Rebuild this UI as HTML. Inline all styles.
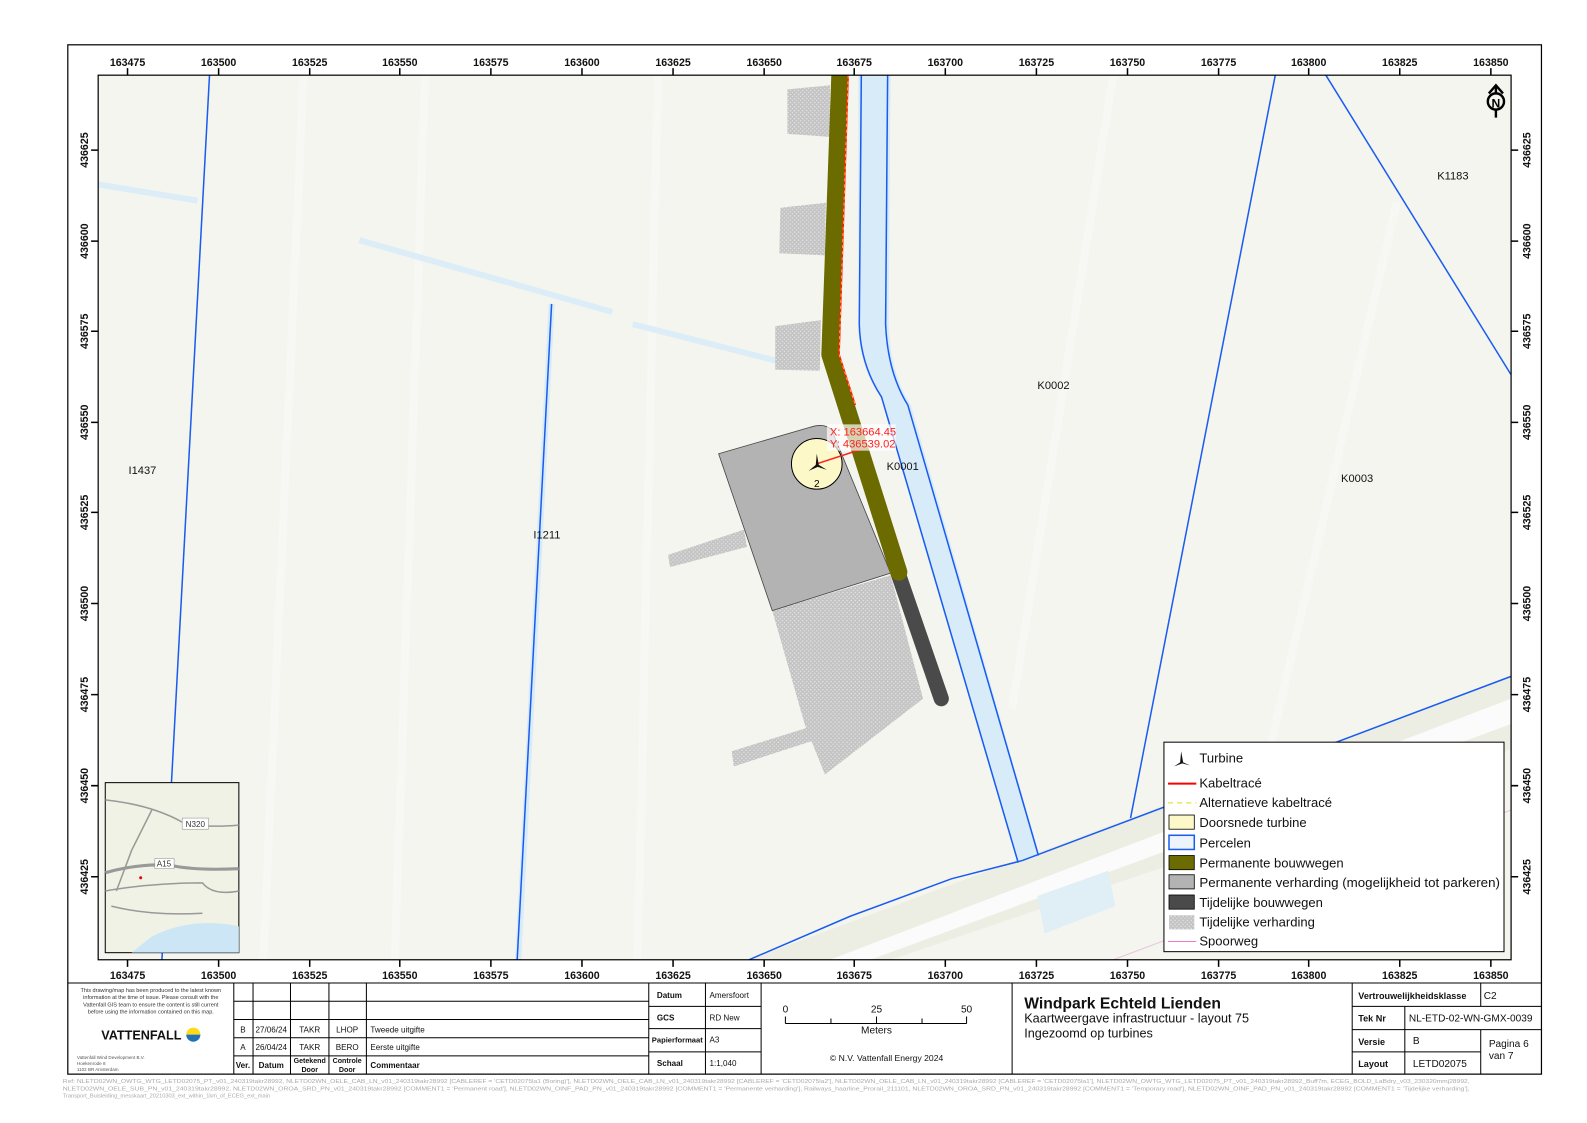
<!DOCTYPE html>
<html><head><meta charset="utf-8"><style>
html,body{margin:0;padding:0;background:#fff;}
svg{display:block;font-family:"Liberation Sans",Arial,sans-serif;}
</style></head><body>
<svg width="1587" height="1123" viewBox="0 0 1568 1109" xmlns="http://www.w3.org/2000/svg">
<defs>
<pattern id="dots" width="4" height="4" patternUnits="userSpaceOnUse">
<rect width="4" height="4" fill="#c4c4c4"/><circle cx="1" cy="1" r="0.7" fill="#e8e8e8"/><circle cx="3" cy="3" r="0.6" fill="#ececec"/>
</pattern>
<clipPath id="mapclip"><rect x="97" y="74" width="1396" height="874"/></clipPath>
</defs>
<rect width="1568" height="1109" fill="#fff"/>
<rect x="67" y="44" width="1456" height="1017" fill="none" stroke="#000" stroke-width="1.2"/>
<g clip-path="url(#mapclip)">
<rect x="97" y="74" width="1396" height="874" fill="#f5f5f0"/>
<g stroke="#f9f9f5" stroke-width="8" opacity="0.6">
<line x1="300" y1="74" x2="260" y2="948"/><line x1="420" y1="74" x2="390" y2="948"/>
<line x1="650" y1="74" x2="630" y2="948"/><line x1="1100" y1="74" x2="1000" y2="700"/>
<line x1="1380" y1="200" x2="1250" y2="760"/>
</g>
<polygon points="740,948 1493,668 1493,740 880,948" fill="#eceee3"/>
<polygon points="820,948 1493,690 1493,715 860,948" fill="#fbfbfb"/>
<polygon points="1025,885 1095,860 1102,895 1032,922" fill="#e0eef6"/>
<line x1="1100" y1="948" x2="1493" y2="800" stroke="#e6c6dc" stroke-width="1"/>
<g stroke="#dcedf8" stroke-width="6" fill="none">
<line x1="97" y1="182" x2="195" y2="198"/>
<line x1="355" y1="237" x2="605" y2="308"/>
<line x1="625" y1="320" x2="790" y2="362"/>
</g>
<line x1="545" y1="300" x2="512" y2="948" stroke="#d7ebf8" stroke-width="6"/>
<path d="M848,74 L880,74 L878,320 Q880,370 900,400 L1027,845 L1005,852 L870,392 Q848,360 848,320 Z" fill="#d7ebf8"/>
<g stroke="#1a5cf0" stroke-width="1.5" fill="none">
<path d="M851,74 L849,320 Q850,360 871,392 L1006,852"/>
<path d="M877,74 L875,320 Q877,368 897,400 L1026,845"/>
<line x1="207" y1="74" x2="160" y2="948"/>
<line x1="545" y1="300" x2="511" y2="948"/>
<line x1="1260" y1="74" x2="1117" y2="808"/>
<line x1="1310" y1="74" x2="1493" y2="370"/>
<polyline points="740,948 840,905 940,868 1010,850 1493,668"/>
</g>
<polygon points="778,88 820,84 820,135 778,132" fill="url(#dots)"/>
<polygon points="771,205 816,200 815,252 770,250" fill="url(#dots)"/>
<polygon points="766,322 811,316 810,366 766,365" fill="url(#dots)"/>
<polygon points="660,548 735,523 738,540 662,560" fill="url(#dots)"/>
<polygon points="723,742 800,718 802,732 725,757" fill="url(#dots)"/>
<polygon points="763,603 880,568 912,690 815,765 795,715" fill="url(#dots)"/>
<path d="M710,448 L800,422 Q815,417 822,425 L880,566 L763,603 Z" fill="#b3b3b3" stroke="#444" stroke-width="0.8"/>
<line x1="888" y1="568" x2="930" y2="690" stroke="#4a4a4a" stroke-width="15" stroke-linecap="round"/>
<polyline points="830,70 820,350 888,565" fill="none" stroke="#6b6b00" stroke-width="17" stroke-linecap="round" stroke-linejoin="round"/>
<polyline points="838,74 829,350 845,400" fill="none" stroke="#ff1a1a" stroke-width="1.6"/>
<polyline points="838,74 829,350 845,400" fill="none" stroke="#ffe000" stroke-width="0.7" stroke-dasharray="3 3"/>
<circle cx="807" cy="458" r="25" fill="#fcf8c8" stroke="#000" stroke-width="1"/>
<line x1="807" y1="458" x2="853" y2="443" stroke="#ff2020" stroke-width="1.5"/>
<path d="M807,448 L809,459 L817,464 L808,461 L799,465 L806,459 Z" fill="#111"/>
<text x="807" y="481" font-size="10" text-anchor="middle">2</text>
<rect x="817" y="419" width="68" height="26" fill="#fff" opacity="0.7"/>
<text x="820" y="430" font-size="11" fill="#ff2020">X: 163664.45</text>
<text x="820" y="442" font-size="11" fill="#ff2020">Y: 436539.02</text>
<g font-size="11" fill="#111">
<text x="127" y="468">I1437</text><text x="527" y="532">I1211</text>
<text x="876" y="464">K0001</text><text x="1025" y="384">K0002</text>
<text x="1325" y="476">K0003</text><text x="1420" y="177">K1183</text>
</g>
<g transform="translate(1478,98)" stroke="#000" stroke-width="2.4" fill="none">
<line x1="0" y1="-14" x2="0" y2="18"/><polyline points="-7,-6 0,-14 7,-6"/>
<circle cx="0" cy="2" r="8" fill="#f5f5f0"/>
</g>
<text x="1478" y="106" font-size="12" font-weight="bold" text-anchor="middle">N</text>
<rect x="104" y="773" width="132" height="168" fill="#eff2e4" stroke="#000" stroke-width="1"/>
<g fill="none" stroke="#999" stroke-width="1.5">
<path d="M104,790 Q150,795 180,812 Q200,818 236,815"/>
<path d="M104,862 Q140,852 170,855 Q195,860 236,858" stroke-width="3"/>
<path d="M104,880 Q150,872 200,872 Q210,885 236,880"/>
<path d="M150,800 L130,840 L115,880"/>
<path d="M110,895 Q150,905 200,902"/>
</g>
<path d="M150,925 Q190,905 236,915 L236,941 L130,941 Z" fill="#cde6f5"/>
<rect x="180" y="808" width="26" height="11" fill="#fff" stroke="#888" stroke-width="0.5"/>
<text x="193" y="817" font-size="8" text-anchor="middle" fill="#333">N320</text>
<rect x="153" y="848" width="19" height="10" fill="#fff" stroke="#888" stroke-width="0.5"/>
<text x="162" y="856" font-size="8" text-anchor="middle" fill="#333">A15</text>
<circle cx="139" cy="867" r="1.5" fill="#e00"/>
<rect x="1150" y="733" width="336" height="207" fill="#fff" stroke="#000" stroke-width="1"/>
<g font-size="12.9" fill="#111">
<path d="M1167,742 L1169,753 L1176,756 L1168,754 L1160,757 L1166,753 Z" fill="#111"/>
<text x="1185" y="753">Turbine</text>
<line x1="1154" y1="774" x2="1182" y2="774" stroke="#f00" stroke-width="2"/><text x="1185" y="778">Kabeltracé</text>
<line x1="1154" y1="793" x2="1182" y2="793" stroke="#dede00" stroke-width="1" stroke-dasharray="5 4"/><text x="1185" y="797">Alternatieve kabeltracé</text>
<rect x="1155" y="805" width="25" height="14" fill="#fcf8c8" stroke="#000" stroke-width="0.8"/><text x="1185" y="817">Doorsnede turbine</text>
<rect x="1155" y="825" width="25" height="14" fill="#eef4fb" stroke="#1a5cf0" stroke-width="1.5"/><text x="1185" y="837">Percelen</text>
<rect x="1155" y="845" width="25" height="14" fill="#6b6b00" stroke="#000" stroke-width="0.8"/><text x="1185" y="857">Permanente bouwwegen</text>
<rect x="1155" y="864" width="25" height="14" fill="#b3b3b3" stroke="#000" stroke-width="0.8"/><text x="1185" y="876" textLength="297" lengthAdjust="spacingAndGlyphs">Permanente verharding (mogelijkheid tot parkeren)</text>
<rect x="1155" y="884" width="25" height="14" fill="#4a4a4a" stroke="#000" stroke-width="0.8"/><text x="1185" y="896">Tijdelijke bouwwegen</text>
<rect x="1155" y="904" width="25" height="14" fill="url(#dots)"/><text x="1185" y="915">Tijdelijke verharding</text>
<line x1="1154" y1="930" x2="1182" y2="930" stroke="#f07ad0" stroke-width="1"/><text x="1185" y="934">Spoorweg</text>
</g>
</g>
<rect x="97" y="74" width="1396" height="874" fill="none" stroke="#000" stroke-width="1.2"/>
<g font-size="10.5" font-weight="bold" fill="#111" text-anchor="middle" stroke="none">
<text x="126" y="65">163475</text><text x="216" y="65">163500</text><text x="306" y="65">163525</text><text x="395" y="65">163550</text><text x="485" y="65">163575</text><text x="575" y="65">163600</text><text x="665" y="65">163625</text><text x="755" y="65">163650</text><text x="844" y="65">163675</text><text x="934" y="65">163700</text><text x="1024" y="65">163725</text><text x="1114" y="65">163750</text><text x="1204" y="65">163775</text><text x="1293" y="65">163800</text><text x="1383" y="65">163825</text><text x="1473" y="65">163850</text>
<text x="126" y="967">163475</text><text x="216" y="967">163500</text><text x="306" y="967">163525</text><text x="395" y="967">163550</text><text x="485" y="967">163575</text><text x="575" y="967">163600</text><text x="665" y="967">163625</text><text x="755" y="967">163650</text><text x="844" y="967">163675</text><text x="934" y="967">163700</text><text x="1024" y="967">163725</text><text x="1114" y="967">163750</text><text x="1204" y="967">163775</text><text x="1293" y="967">163800</text><text x="1383" y="967">163825</text><text x="1473" y="967">163850</text>
<text transform="translate(87,148) rotate(-90)">436625</text><text transform="translate(87,238) rotate(-90)">436600</text><text transform="translate(87,327) rotate(-90)">436575</text><text transform="translate(87,417) rotate(-90)">436550</text><text transform="translate(87,506) rotate(-90)">436525</text><text transform="translate(87,596) rotate(-90)">436500</text><text transform="translate(87,686) rotate(-90)">436475</text><text transform="translate(87,776) rotate(-90)">436450</text><text transform="translate(87,866) rotate(-90)">436425</text>
<text transform="translate(1512,148) rotate(-90)">436625</text><text transform="translate(1512,238) rotate(-90)">436600</text><text transform="translate(1512,327) rotate(-90)">436575</text><text transform="translate(1512,417) rotate(-90)">436550</text><text transform="translate(1512,506) rotate(-90)">436525</text><text transform="translate(1512,596) rotate(-90)">436500</text><text transform="translate(1512,686) rotate(-90)">436475</text><text transform="translate(1512,776) rotate(-90)">436450</text><text transform="translate(1512,866) rotate(-90)">436425</text>
</g>
<g stroke="#000" stroke-width="1.5">
<path d="M126,67v7M216,67v7M306,67v7M395,67v7M485,67v7M575,67v7M665,67v7M755,67v7M844,67v7M934,67v7M1024,67v7M1114,67v7M1204,67v7M1293,67v7M1383,67v7M1473,67v7"/>
<path d="M126,948v7M216,948v7M306,948v7M395,948v7M485,948v7M575,948v7M665,948v7M755,948v7M844,948v7M934,948v7M1024,948v7M1114,948v7M1204,948v7M1293,948v7M1383,948v7M1473,948v7"/>
<path d="M90,148h7M90,238h7M90,327h7M90,417h7M90,506h7M90,596h7M90,686h7M90,776h7M90,866h7"/>
<path d="M1493,148h7M1493,238h7M1493,327h7M1493,417h7M1493,506h7M1493,596h7M1493,686h7M1493,776h7M1493,866h7"/>
</g>
<g stroke="#000" stroke-width="1" fill="none">
<line x1="67" y1="971" x2="1523" y2="971"/>
<line x1="231" y1="971" x2="231" y2="1061"/>
<line x1="250" y1="971" x2="250" y2="1061"/>
<line x1="287" y1="971" x2="287" y2="1061"/>
<line x1="325" y1="971" x2="325" y2="1061"/>
<line x1="362" y1="971" x2="362" y2="1061"/>
<line x1="641" y1="971" x2="641" y2="1061"/>
<line x1="697" y1="971" x2="697" y2="1061"/>
<line x1="752" y1="971" x2="752" y2="1061"/>
<line x1="1000" y1="971" x2="1000" y2="1061"/>
<line x1="1336" y1="971" x2="1336" y2="1061"/>
<path d="M231,989H641M231,1007H641M231,1025H641M231,1043H641"/>
<path d="M641,994H752M641,1016H752M641,1039H752"/>
<path d="M1336,994H1523M1336,1017H1523M1336,1039H1463"/>
<line x1="1463" y1="971" x2="1463" y2="994"/>
<line x1="1388" y1="994" x2="1388" y2="1061"/>
<line x1="1463" y1="1017" x2="1463" y2="1061"/>
</g>
<g font-size="5.5" fill="#333" text-anchor="middle">
<text x="149" y="980">This drawing/map has been produced to the latest known</text>
<text x="149" y="987">information at the time of issue. Please consult with the</text>
<text x="149" y="994">Vattenfall GIS team to ensure the content is still current</text>
<text x="149" y="1001">before using the information contained on this map.</text>
</g>
<text x="100" y="1027" font-size="12.5" font-weight="bold" fill="#111">VATTENFALL</text>
<path d="M184,1022 a7,7 0 0 1 14,0 Z" fill="#ffda1a"/><path d="M184,1022 a7,7 0 0 0 14,0 Z" fill="#2071b5"/>
<g font-size="4.5" fill="#555"><text x="76" y="1046">Vattenfall Wind Development B.V.</text><text x="76" y="1052">Hoekenrode 8</text><text x="76" y="1058">1102 BR Amsterdam</text></g>
<g font-size="8" fill="#111">
<text x="240" y="1020" text-anchor="middle">B</text><text x="268" y="1020" text-anchor="middle">27/06/24</text><text x="306" y="1020" text-anchor="middle">TAKR</text><text x="343" y="1020" text-anchor="middle">LHOP</text><text x="366" y="1020">Tweede uitgifte</text>
<text x="240" y="1037" text-anchor="middle">A</text><text x="268" y="1037" text-anchor="middle">26/04/24</text><text x="306" y="1037" text-anchor="middle">TAKR</text><text x="343" y="1037" text-anchor="middle">BERO</text><text x="366" y="1037">Eerste uitgifte</text>
</g>
<g font-size="8" font-weight="bold" fill="#111">
<text x="240" y="1055" text-anchor="middle">Ver.</text><text x="268" y="1055" text-anchor="middle">Datum</text>
<text x="306" y="1050" text-anchor="middle" font-size="7">Getekend</text><text x="306" y="1059" text-anchor="middle" font-size="7">Door</text>
<text x="343" y="1050" text-anchor="middle" font-size="7">Controle</text><text x="343" y="1059" text-anchor="middle" font-size="7">Door</text>
<text x="366" y="1055">Commentaar</text>
<text x="649" y="986">Datum</text><text x="649" y="1008">GCS</text><text x="644" y="1030" font-size="7.5">Papierformaat</text><text x="649" y="1053">Schaal</text>
</g>
<g font-size="8" fill="#111">
<text x="701" y="986">Amersfoort</text><text x="701" y="1008">RD New</text><text x="701" y="1030">A3</text><text x="701" y="1053">1:1,040</text>
</g>
<g font-size="10" fill="#111" text-anchor="middle">
<text x="776" y="1000">0</text><text x="866" y="1000">25</text><text x="955" y="1000">50</text>
<text x="866" y="1021">Meters</text>
<text x="876" y="1048" font-size="8.5">© N.V. Vattenfall Energy 2024</text>
</g>
<path d="M776,1004v7M821,1006v5M866,1004v7M911,1006v5M955,1004v7M776,1011H955" stroke="#000" stroke-width="1"/>
<text x="1012" y="996" font-size="15.5" font-weight="bold" fill="#111">Windpark Echteld Lienden</text>
<text x="1012" y="1010" font-size="12.5" fill="#111">Kaartweergave infrastructuur -  layout 75</text>
<text x="1012" y="1025" font-size="12.5" fill="#111">Ingezoomd op turbines</text>
<g font-size="9" font-weight="bold" fill="#111">
<text x="1342" y="987">Vertrouwelijkheidsklasse</text>
<text x="1342" y="1009">Tek Nr</text><text x="1342" y="1032">Versie</text><text x="1342" y="1054">Layout</text>
</g>
<g font-size="10" fill="#111">
<text x="1466" y="987">C2</text>
<text x="1392" y="1009">NL-ETD-02-WN-GMX-0039</text>
<text x="1396" y="1031">B</text><text x="1396" y="1054">LETD02075</text>
<text x="1471" y="1034">Pagina 6</text><text x="1471" y="1046">van 7</text>
</g>
<g font-size="5.6" fill="#aaa">
<text x="62" y="1070" textLength="1390" lengthAdjust="spacingAndGlyphs">Ref: NLETD02WN_OWTG_WTG_LETD02075_PT_v01_240319takr28992, NLETD02WN_OELE_CAB_LN_v01_240319takr28992 [CABLEREF = 'CETD02075la1 (Boring)'], NLETD02WN_OELE_CAB_LN_v01_240319takr28992 [CABLEREF = 'CETD02075la2'], NLETD02WN_OELE_CAB_LN_v01_240319takr28992 [CABLEREF = 'CETD02075la1'], NLETD02WN_OWTG_WTG_LETD02075_PT_v01_240319takr28992_Buff7m, ECEG_BOLD_LaBdry_v03_230320mmj28992,</text>
<text x="62" y="1077" textLength="1390" lengthAdjust="spacingAndGlyphs">NLETD02WN_OELE_SUB_PN_v01_240319takr28992, NLETD02WN_OROA_SRD_PN_v01_240319takr28992 [COMMENT1 = 'Permanent road'], NLETD02WN_OINF_PAD_PN_v01_240319takr28992 [COMMENT1 = 'Permanente verharding'], Railways_haarline_Prorail_211101, NLETD02WN_OROA_SRD_PN_v01_240319takr28992 [COMMENT1 = 'Temporary road'], NLETD02WN_OINF_PAD_PN_v01_240319takr28992 [COMMENT1 = 'Tijdelijke verharding'],</text>
<text x="62" y="1084">Transport_Buisleiding_messkaart_20210303_ext_within_1km_of_ECEG_ext_main</text>
</g>
</svg>
</body></html>
